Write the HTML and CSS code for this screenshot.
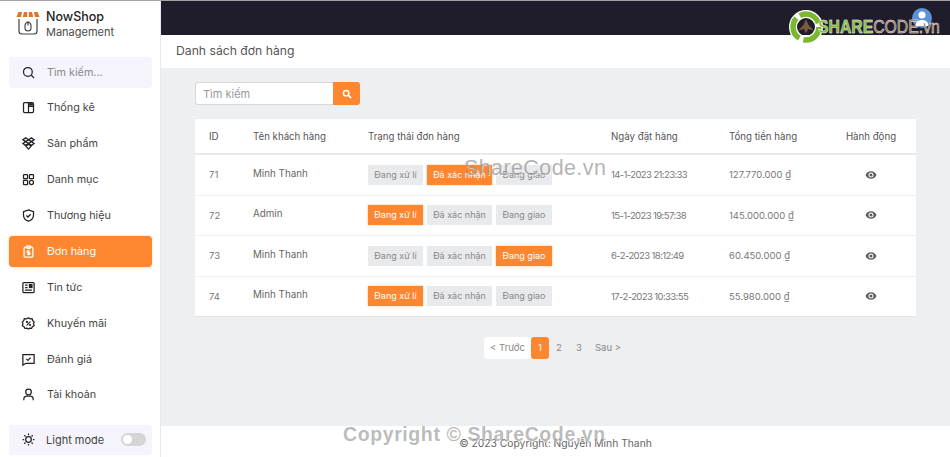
FILE: index.html
```html
<!DOCTYPE html>
<html lang="vi">
<head>
    <meta charset="UTF-8">
    <meta name="viewport" content="width=device-width, initial-scale=1.0">
    <title>Danh sách đơn hàng</title>
    <link rel="stylesheet" href="styles.css">
</head>
<body>
    <div class="app">
        <!-- Sidebar -->
        <aside class="sidebar">
            <div class="brand">
                <svg class="brand-logo" width="24" height="24" viewBox="0 0 24 24">
                    <path d="M2.500 1h3.500L5 6H.5zM8 1h3.200v5H6.800zM12.800 1H16l1.200 5h-4.400zM18 1h3.500L23.500 6H19z" fill="#e0732a"/>
                    <path d="M3 8v12a3 3 0 0 0 3 3h12a3 3 0 0 0 3-3V8" fill="none" stroke="#444" stroke-width="1.200"/>
                    <path d="M9 14.500a3 3 0 0 1 6 0v2.500a3 3 0 0 1-6 0zM12 11.500v3M10.500 11h3" fill="none" stroke="#444" stroke-width="1.100"/>
                </svg>
                <div class="brand-text">
                    <div class="brand-name">NowShop</div>
                    <div class="brand-sub">Management</div>
                </div>
            </div>

            <nav class="menu">
                <div class="menu-item menu-search">
                    <svg class="icon" viewBox="0 0 24 24"><circle cx="11" cy="11" r="7"/><path d="M16.500 16.500L21 21"/></svg>
                    <span>Tìm kiếm...</span>
                </div>
                <a class="menu-item">
                    <svg class="icon" viewBox="0 0 24 24"><rect x="4" y="4" width="16" height="16" rx="2"/><path d="M12 4v16M12 10h8"/><rect x="13" y="5" width="6" height="4" fill="#222" stroke="none"/></svg>
                    <span>Thống kê</span>
                </a>
                <a class="menu-item">
                    <svg class="icon" viewBox="0 0 24 24"><path d="M7.500 3l4.500 3-4.500 3L3 6zM16.500 3L21 6l-4.500 3L12 6zM7.500 9l4.500 3-4.500 3L3 12zM16.500 9l4.500 3-4.500 3L12 12zM7.500 16l4.500-2.500 4.500 2.500L12 21z"/></svg>
                    <span>Sản phẩm</span>
                </a>
                <a class="menu-item">
                    <svg class="icon" viewBox="0 0 24 24"><rect x="4" y="4" width="6.500" height="6.500" rx="1"/><rect x="13.500" y="4" width="6.500" height="6.500" rx="1"/><rect x="4" y="13.500" width="6.500" height="6.500" rx="1"/><circle cx="16.750" cy="16.750" r="3.250"/></svg>
                    <span>Danh mục</span>
                </a>
                <a class="menu-item">
                    <svg class="icon" viewBox="0 0 24 24"><path d="M12 3l8 3v5.500c0 4.500-3.200 8-8 9.500-4.800-1.500-8-5-8-9.500V6z"/><path d="M8.500 12l2.500 2.500 4.500-4.500"/></svg>
                    <span>Thương hiệu</span>
                </a>
                <a class="menu-item active">
                    <svg class="icon" viewBox="0 0 24 24"><rect x="5" y="5" width="14" height="16" rx="2"/><rect x="9" y="3" width="6" height="4" rx="1"/><path d="M14 11h-3a1.250 1.250 0 0 0 0 2.800h2a1.250 1.250 0 0 1 0 2.800h-3M12 9.800v8"/></svg>
                    <span>Đơn hàng</span>
                </a>
                <a class="menu-item">
                    <svg class="icon" viewBox="0 0 24 24"><rect x="3" y="4" width="18" height="16" rx="1.500"/><rect x="13.500" y="7.500" width="4" height="4.500" fill="#222"/><path d="M6.500 8h4M6.500 12h4M6.500 16h11"/></svg>
                    <span>Tin tức</span>
                </a>
                <a class="menu-item">
                    <svg class="icon" viewBox="0 0 24 24"><path d="M12 3l2.700 1.600 3.100-.2 1 3 2.200 2.100-1 3 1 3-2.700 1.500-1.400 2.800-3.100-.2L12 21l-2.700-1.400-3.100.2-1.400-2.800L2.100 15.500l1-3-1-3 2.200-2.100 1-3 3.100.2z"/><path d="M9 15l6-6"/><circle cx="9.500" cy="9.500" r=".8"/><circle cx="14.500" cy="14.500" r=".8"/></svg>
                    <span>Khuyến mãi</span>
                </a>
                <a class="menu-item">
                    <svg class="icon" viewBox="0 0 24 24"><path d="M3 4h18v14H8l-5 3z"/><path d="M8.500 11l2.500 2.500 4.500-4.500"/></svg>
                    <span>Đánh giá</span>
                </a>
                <a class="menu-item">
                    <svg class="icon" viewBox="0 0 24 24"><circle cx="12" cy="8" r="4.500"/><path d="M4.500 21v-1.500a5 5 0 0 1 5-5h5a5 5 0 0 1 5 5V21"/></svg>
                    <span>Tài khoản</span>
                </a>
            </nav>

            <div class="mode">
                <svg class="icon" viewBox="0 0 24 24"><circle cx="12" cy="12" r="4.500"/><path d="M12 2.500v2.500M12 19v2.500M2.500 12H5M19 12h2.500M5.300 5.300l1.800 1.800M16.900 16.900l1.800 1.800M5.300 18.700l1.800-1.800M16.900 7.100l1.800-1.800"/></svg>
                <span>Light mode</span>
                <div class="toggle"><div class="toggle-knob"></div></div>
            </div>
        </aside>

        <!-- Main part -->
        <div class="main">
            <header class="topbar">
                <div class="avatar">
                    <svg width="20" height="20" viewBox="0 0 20 20"><circle cx="10" cy="7" r="3.500" fill="#fff"/><path d="M3.500 18c0-4 3-6 6.500-6s6.500 2 6.500 6z" fill="#fff"/></svg>
                </div>
            </header>
            <div class="page-title">Danh sách đơn hàng</div>

            <section class="content">
                <div class="search-box">
                    <input class="search-input" placeholder="Tìm kiếm">
                    <button class="search-btn">
                        <svg width="10" height="10" viewBox="0 0 24 24"><circle cx="10" cy="10" r="6.500" fill="none" stroke="#fff" stroke-width="3.500"/><path d="M15 15l7 7" stroke="#fff" stroke-width="4"/></svg>
                    </button>
                </div>

                <table class="orders">
                    <thead>
                        <tr>
                            <th class="col-id">ID</th>
                            <th class="col-name">Tên khách hàng</th>
                            <th class="col-status">Trạng thái đơn hàng</th>
                            <th class="col-date">Ngày đặt hàng</th>
                            <th class="col-total">Tổng tiền hàng</th>
                            <th class="col-action">Hành động</th>
                        </tr>
                    </thead>
                    <tbody>
                        <tr>
                            <td>71</td>
                            <td class="cell-name">Minh Thanh</td>
                            <td><div class="status-group"><span class="status st-1">Đang xử lí</span><span class="status st-2 on">Đã xác nhận</span><span class="status st-3">Đang giao</span></div></td>
                            <td class="cell-date">14-1-2023 21:23:33</td>
                            <td>127.770.000 ₫</td>
                            <td class="col-action"><svg class="eye" viewBox="0 0 24 24"><path d="M12 4.500C7 4.500 2.700 7.600 1 12c1.700 4.400 6 7.500 11 7.500s9.300-3.100 11-7.500c-1.700-4.400-6-7.500-11-7.500zM12 17a5 5 0 1 1 0-10 5 5 0 0 1 0 10zm0-8a3 3 0 1 0 0 6 3 3 0 0 0 0-6z"/></svg></td>
                        </tr>
                        <tr>
                            <td>72</td>
                            <td class="cell-name">Admin</td>
                            <td><div class="status-group"><span class="status st-1 on">Đang xử lí</span><span class="status st-2">Đã xác nhận</span><span class="status st-3">Đang giao</span></div></td>
                            <td class="cell-date">15-1-2023 19:57:38</td>
                            <td>145.000.000 ₫</td>
                            <td class="col-action"><svg class="eye" viewBox="0 0 24 24"><path d="M12 4.500C7 4.500 2.700 7.600 1 12c1.700 4.400 6 7.500 11 7.500s9.300-3.100 11-7.500c-1.700-4.400-6-7.500-11-7.500zM12 17a5 5 0 1 1 0-10 5 5 0 0 1 0 10zm0-8a3 3 0 1 0 0 6 3 3 0 0 0 0-6z"/></svg></td>
                        </tr>
                        <tr>
                            <td>73</td>
                            <td class="cell-name">Minh Thanh</td>
                            <td><div class="status-group"><span class="status st-1">Đang xử lí</span><span class="status st-2">Đã xác nhận</span><span class="status st-3 on">Đang giao</span></div></td>
                            <td class="cell-date">6-2-2023 18:12:49</td>
                            <td>60.450.000 ₫</td>
                            <td class="col-action"><svg class="eye" viewBox="0 0 24 24"><path d="M12 4.500C7 4.500 2.700 7.600 1 12c1.700 4.400 6 7.500 11 7.500s9.300-3.100 11-7.500c-1.700-4.400-6-7.500-11-7.500zM12 17a5 5 0 1 1 0-10 5 5 0 0 1 0 10zm0-8a3 3 0 1 0 0 6 3 3 0 0 0 0-6z"/></svg></td>
                        </tr>
                        <tr>
                            <td>74</td>
                            <td class="cell-name">Minh Thanh</td>
                            <td><div class="status-group"><span class="status st-1 on">Đang xử lí</span><span class="status st-2">Đã xác nhận</span><span class="status st-3">Đang giao</span></div></td>
                            <td class="cell-date">17-2-2023 10:33:55</td>
                            <td>55.980.000 ₫</td>
                            <td class="col-action"><svg class="eye" viewBox="0 0 24 24"><path d="M12 4.500C7 4.500 2.700 7.600 1 12c1.700 4.400 6 7.500 11 7.500s9.300-3.100 11-7.500c-1.700-4.400-6-7.500-11-7.500zM12 17a5 5 0 1 1 0-10 5 5 0 0 1 0 10zm0-8a3 3 0 1 0 0 6 3 3 0 0 0 0-6z"/></svg></td>
                        </tr>
                    </tbody>
                </table>

                <div class="pagination">
                    <a class="page-link page-prev">&lt; Trước</a>
                    <a class="page-link page-num current">1</a>
                    <a class="page-link page-num">2</a>
                    <a class="page-link page-num">3</a>
                    <a class="page-link page-next">Sau &gt;</a>
                </div>
            </section>

            <footer class="footer">© 2023 Copyright: Nguyễn Minh Thanh</footer>
        </div>
    </div>

    <!-- Watermarks on top of the page -->
    <div class="mark-logo">
        <svg width="34" height="34" viewBox="0 0 34 34">
            <circle cx="17" cy="17" r="13" fill="none" stroke="#fff" stroke-width="8"/>
            <circle cx="17" cy="17" r="13" fill="none" stroke="#7cb82f" stroke-width="5.500" stroke-dasharray="23 4.200"/>
            <path d="M17 9l2.500 6 5.500 5.500-6-1.500-2 4.500-2-4.500-6 1.500 5.500-5.500z" fill="#7a5a3c"/>
        </svg>
        <div class="mark-words"><span class="mark-share">SHARE</span><span class="mark-code">CODE.vn</span></div>
    </div>
    <div class="mark-text">ShareCode.vn</div>
    <div class="mark-copy">Copyright © ShareCode.vn</div>
</body>
</html>
```

FILE: styles.css
```css
html, body {
    margin: 0;
    padding: 0;
}
body {
    font-family: 'Inter', 'Liberation Sans', sans-serif;
    background-color: #fff;
    color: #333;
    overflow: hidden;
}
.app {
    display: flex;
    height: 457px;
    border-top: 1px solid #a3a3a6;
    box-sizing: border-box;
}

/* Sidebar */
.sidebar {
    width: 161px;
    flex-shrink: 0;
    display: flex;
    flex-direction: column;
    padding: 9px 8px 0 9px;
    box-sizing: border-box;
    border-right: 1px solid #e9e9ec;
}
.brand {
    display: flex;
    align-items: flex-start;
    gap: 6px;
    height: 46.500px;
    padding-left: 7px;
}
.brand-logo {
    flex-shrink: 0;
    margin-top: 1px;
}
.brand-name {
    font-size: 12.500px;
    font-weight: 500;
    color: #222;
    line-height: 14px;
}
.brand-sub {
    font-size: 11px;
    color: #4a4a4a;
    line-height: 14px;
    margin-top: 1px;
}
.menu {
    display: flex;
    flex-direction: column;
    gap: 4.875px;
}
.menu-item {
    display: flex;
    align-items: center;
    gap: 11px;
    height: 31px;
    padding-left: 12px;
    border-radius: 4px;
    font-size: 10.800px;
    color: #444;
}
.menu-search {
    background-color: #f5f4fd;
    color: #8a8a8a;
}
.menu-item.active {
    background-color: #fd8730;
    color: #fff;
    box-shadow: 0 0 2px rgba(253, 135, 48, 0.5);
}
.menu-item.active .icon {
    stroke: #fff;
}
.icon {
    width: 15px;
    height: 15px;
    flex-shrink: 0;
    fill: none;
    stroke: #222;
    stroke-width: 2;
}
.mode {
    display: flex;
    align-items: center;
    height: 30px;
    margin-top: 14.600px;
    padding: 0 6px 0 12px;
    background-color: #f5f4fd;
    border-radius: 4px;
    font-size: 11px;
    color: #444;
}
.mode span {
    margin-left: 10px;
}
.toggle {
    width: 25px;
    height: 13px;
    margin-left: auto;
    background-color: #d5d5d7;
    border-radius: 7px;
    padding: 2px 0 0 2px;
    box-sizing: border-box;
}
.toggle-knob {
    width: 9px;
    height: 9px;
    background-color: #fff;
    border-radius: 50%;
}

/* Main part */
.main {
    flex: 1;
    display: flex;
    flex-direction: column;
    min-width: 0;
}
.topbar {
    height: 34px;
    flex-shrink: 0;
    background-color: #1f1d2b;
    display: flex;
    justify-content: flex-end;
    padding: 7px 18px 0 0;
    box-sizing: border-box;
}
.avatar {
    width: 20px;
    height: 20px;
    background-color: #5b93d8;
    border-radius: 50%;
    overflow: hidden;
}
.page-title {
    height: 33px;
    flex-shrink: 0;
    padding-left: 15px;
    font-size: 12.200px;
    line-height: 32px;
    color: #555;
}
.content {
    flex: 1;
    background-color: #eeeff1;
    padding: 14px 34px 0;
    box-sizing: border-box;
}
.search-box {
    display: flex;
    width: 165px;
    height: 23px;
    margin-bottom: 14px;
}
.search-input {
    flex: 1;
    min-width: 0;
    height: 23px;
    padding: 0 7px;
    box-sizing: border-box;
    border: 1px solid #d8d8da;
    border-right: none;
    border-radius: 3px 0 0 3px;
    font-family: inherit;
    font-size: 11px;
    outline: none;
}
.search-input::placeholder {
    color: #999;
}
.search-btn {
    width: 27px;
    height: 23px;
    padding: 0;
    border: none;
    border-radius: 0 3px 3px 0;
    background-color: #fd8730;
    display: flex;
    align-items: center;
    justify-content: center;
}

/* Orders table */
.orders {
    width: 721px;
    table-layout: fixed;
    border-collapse: collapse;
    background-color: #fff;
    font-size: 9.500px;
    color: #777;
}
.orders th {
    height: 34px;
    padding: 0 0 0 14px;
    text-align: left;
    font-weight: 400;
    color: #555;
    font-size: 9.700px;
    border-bottom: 2px solid #e9eaec;
}
.orders td {
    height: 39.500px;
    padding: 0 0 0 14px;
    border-bottom: 1px solid #eeeff1;
}
.orders tbody tr:last-child td {
    border-bottom-color: #e4e5e7;
}
.col-id { width: 30px; }
.col-name { width: 101px; }
.col-status { width: 229px; }
.col-date { width: 104px; }
.col-total { width: 102px; }
.orders .col-action {
    width: 80px;
    padding: 0 5px 0 0;
    text-align: center;
}
.orders .cell-name {
    height: 36px;
    padding-bottom: 3.500px;
    color: #666;
    font-size: 9.800px;
}
.cell-date {
    letter-spacing: -0.600px;
}
.status-group {
    display: flex;
    gap: 4px;
}
.status {
    height: 20px;
    line-height: 20px;
    text-align: center;
    background-color: #e9eaec;
    color: #888;
    font-size: 9px;
}
.st-1 { width: 55px; }
.st-2 { width: 65px; }
.st-3 { width: 56px; }
.status.on {
    background-color: #fd8730;
    color: #fff;
    box-shadow: 0 0 2px rgba(253, 135, 48, 0.6);
}
.eye {
    width: 12px;
    height: 12px;
    fill: #5c5c5c;
    vertical-align: middle;
}

/* Pagination */
.pagination {
    display: flex;
    justify-content: center;
    align-items: center;
    height: 22px;
    margin-top: 20px;
    font-size: 9.500px;
    color: #888;
}
.page-link {
    height: 22px;
    line-height: 22px;
    text-align: center;
}
.page-prev {
    width: 47px;
    background-color: #fff;
    border-radius: 3px 0 0 3px;
}
.page-num {
    width: 20px;
}
.page-num.current {
    width: 18px;
    background-color: #fd8730;
    color: #fff;
    border-radius: 3px;
}
.page-next {
    width: 38px;
}

.footer {
    height: 31px;
    flex-shrink: 0;
    text-align: center;
    font-size: 10.300px;
    line-height: 34px;
    color: #666;
}

/* Watermarks */
.mark-logo {
    position: absolute;
    top: 10px;
    left: 789px;
    display: flex;
    align-items: center;
}
.mark-words {
    width: 121px;
    margin-left: -5px;
    white-space: nowrap;
    font-family: 'Liberation Sans', sans-serif;
    font-size: 19px;
    -webkit-text-stroke: 0.500px #fff;
    transform: scaleX(0.830);
    transform-origin: left center;
}
.mark-share {
    color: #7cb82f;
    font-weight: 700;
}
.mark-code {
    color: #7a5a3c;
}
.mark-text {
    position: absolute;
    top: 156px;
    left: 464px;
    font-family: 'Liberation Sans', sans-serif;
    font-size: 21.500px;
    letter-spacing: 0.400px;
    color: rgba(130, 130, 130, 0.6);
    text-shadow: 1px 1px 1px rgba(255, 255, 255, 0.6);
}
.mark-copy {
    position: absolute;
    top: 423px;
    left: 343px;
    font-family: 'Liberation Sans', sans-serif;
    font-size: 19.500px;
    font-weight: 700;
    letter-spacing: 0.600px;
    color: rgba(130, 130, 130, 0.55);
    text-shadow: 1px 1px 1px rgba(255, 255, 255, 0.6);
}
```
